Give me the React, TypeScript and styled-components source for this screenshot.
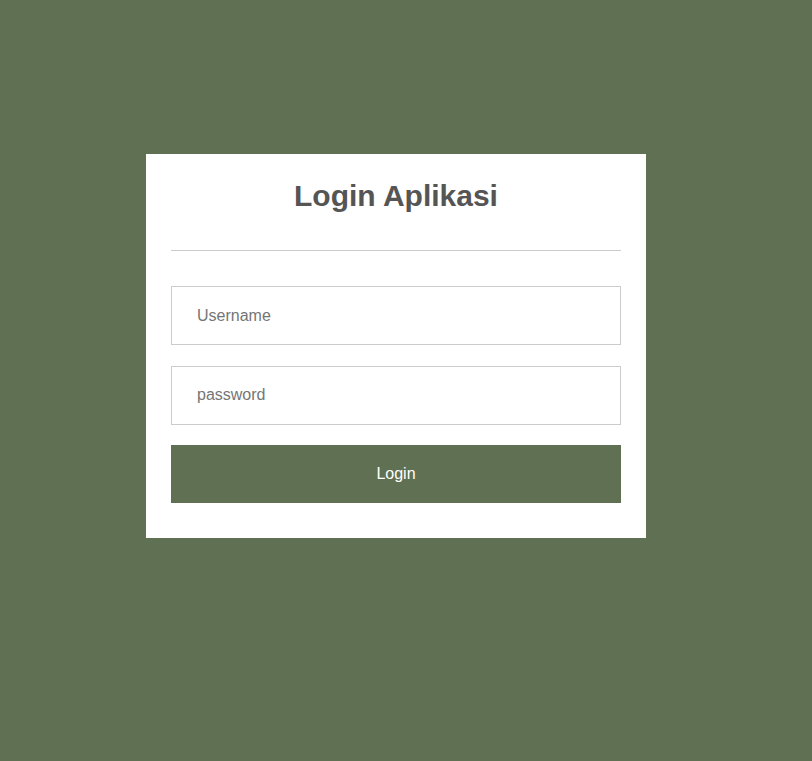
import React from "react";
import styled, { createGlobalStyle } from "styled-components";

const GlobalStyle = createGlobalStyle`
  html, body {
    margin: 0;
    padding: 0;
    background: #607052;
    font-family: "Liberation Sans", Arial, sans-serif;
  }
  * { box-sizing: border-box; }
`;

const Page = styled.div`
  min-height: 761px;
  padding: 154px 0 0 146px;
`;

const Card = styled.div`
  width: 500px;
  background: #ffffff;
  padding: 24px 25px 35px;
`;

const Title = styled.h2`
  margin: 0;
  font-size: 30px;
  line-height: 36px;
  font-weight: 700;
  color: #555555;
  text-align: center;
`;

const Divider = styled.hr`
  margin: 36px 0 35px;
  border: 0;
  border-top: 1px solid #cccccc;
  height: 0;
`;

const Form = styled.form`
  display: flex;
  flex-direction: column;
  gap: 20.5px;
`;

const Input = styled.input`
  display: block;
  width: 100%;
  height: 59px;
  padding: 0 25px;
  border: 1px solid #cccccc;
  background: #ffffff;
  font-family: "Liberation Sans", Arial, sans-serif;
  font-size: 16px;
  color: #555555;
  outline: none;
  &::placeholder {
    color: #757575;
  }
`;

const Button = styled.button`
  display: block;
  width: 100%;
  height: 58px;
  border: 0;
  background: #607052;
  color: #ffffff;
  font-family: "Liberation Sans", Arial, sans-serif;
  font-size: 16px;
  cursor: pointer;
`;

export default function App() {
  return (
    <>
      <GlobalStyle />
      <Page>
        <Card>
          <Title>Login Aplikasi</Title>
          <Divider />
          <Form onSubmit={(e) => e.preventDefault()}>
            <Input type="text" placeholder="Username" />
            <Input type="password" placeholder="password" />
            <Button type="submit">Login</Button>
          </Form>
        </Card>
      </Page>
    </>
  );
}
